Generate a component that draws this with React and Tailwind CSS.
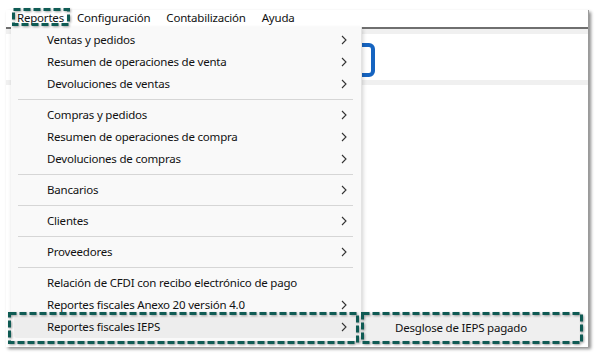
import React from "react";

const FONT = { fontFamily: '"Noto Sans", "Segoe UI", sans-serif' };

function Chevron() {
  return (
    <svg width="6" height="10" viewBox="0 0 6 10" className="shrink-0">
      <polyline points="1,1 5,5 1,9" fill="none" stroke="#333" strokeWidth="1.1" />
    </svg>
  );
}

function Dashed({ className }) {
  // marco punteado de anotación, va encima del contenido
  return (
    <svg className={"absolute pointer-events-none overflow-visible " + className} style={{ filter: "drop-shadow(1px 1px 1px rgba(0,0,0,0.35))" }}>
      <rect x="1.5" y="1.5" width="calc(100% - 3px)" height="calc(100% - 3px)" fill="none" stroke="#0f5b54" strokeWidth="3" strokeDasharray="7 3" />
    </svg>
  );
}

const items = [
  { label: "Ventas y pedidos", sub: true },
  { label: "Resumen de operaciones de venta", sub: true },
  { label: "Devoluciones de ventas", sub: true },
  "sep",
  { label: "Compras y pedidos", sub: true },
  { label: "Resumen de operaciones de compra", sub: true },
  { label: "Devoluciones de compras", sub: true },
  "sep",
  { label: "Bancarios", sub: true },
  "sep",
  { label: "Clientes", sub: true },
  "sep",
  { label: "Proveedores", sub: true },
  "sep",
  { label: "Relación de CFDI con recibo electrónico de pago" },
  { label: "Reportes fiscales Anexo 20 versión 4.0", sub: true },
  { label: "Reportes fiscales IEPS", sub: true, active: true },
];

export default function App() {
  return (
    <div className="relative w-[598px] h-[356px] bg-white text-[11.5px] tracking-[-0.2px] text-[#111]" style={FONT}>
      {/* ventana */}
      <div className="absolute left-[6px] top-[10px] w-[583px] h-[337px] bg-white flex flex-col shadow-[2px_2px_3px_rgba(0,0,0,0.45)] border-r border-[#9a9a9a]">
        <div className="h-[17px] flex items-center pl-[5px] pb-[2px] leading-none">
          <span className="px-[6px]">Reportes</span>
          <span className="px-[6px] ml-[1px]">Configuración</span>
          <span className="px-[6px] ml-[4px]">Contabilización</span>
          <span className="px-[6px] ml-[4px]">Ayuda</span>
        </div>
        <div className="h-[2px] bg-[#6f6f6f]" />
        <div className="h-[5px] bg-[#f0f0f0]" />
        <div className="h-[46px] relative">
          <svg className="absolute left-[330px] top-[8px]" width="48" height="36" viewBox="0 0 48 36">
            <rect x="8" y="3" width="29" height="30" rx="4" fill="none" stroke="#1664c0" strokeWidth="4" />
          </svg>
        </div>
        <div className="h-[5px] bg-[#f0f0f0]" />
        <div className="flex-1" />

        {/* menú desplegado */}
        <div className="absolute left-[5px] top-[17px] w-[351px] bg-[#f9f9f9] border-r border-[#e3e3e3] pt-[2px] pb-[3px] shadow-[1px_2px_4px_rgba(0,0,0,0.18)]">
          {items.map((it, i) =>
            it === "sep" ? (
              <div key={i} className="h-[9px] flex items-center pl-[7px] pr-[8px]">
                <div className="h-px w-full bg-[#d6d6d6]" />
              </div>
            ) : (
              <div
                key={i}
                className={
                  "h-[22px] flex items-center justify-between " +
                  (it.active ? "bg-[#ededed] mx-[3px] pl-[33px] pr-[11px] rounded-[3px]" : "pl-[36px] pr-[14px]")
                }
              >
                <span>{it.label}</span>
                {it.sub && <Chevron />}
              </div>
            )
          )}
        </div>

        {/* submenú */}
        <div className="absolute left-[358px] top-[304px] w-[217px] h-[28px] bg-[#efefef] flex items-center pl-[31px] shadow-[1px_1px_3px_rgba(0,0,0,0.2)]">
          Desglose de IEPS pagado
        </div>
      </div>

      <Dashed className="left-[12px] top-[8px] w-[58px] h-[18px]" />
      <Dashed className="left-[8px] top-[312px] w-[351px] h-[32px]" />
      <Dashed className="left-[361px] top-[312px] w-[222px] h-[32px]" />
    </div>
  );
}
